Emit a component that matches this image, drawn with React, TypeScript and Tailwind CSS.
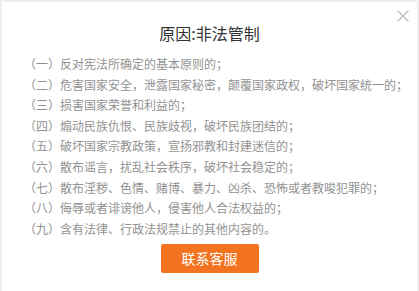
import { X } from 'lucide-react';

const rules = [
	'（一）反对宪法所确定的基本原则的；',
	'（二）危害国家安全，泄露国家秘密，颠覆国家政权，破坏国家统一的；',
	'（三）损害国家荣誉和利益的；',
	'（四）煽动民族仇恨、民族歧视，破坏民族团结的；',
	'（五）破坏国家宗教政策，宣扬邪教和封建迷信的；',
	'（六）散布谣言，扰乱社会秩序，破坏社会稳定的；',
	'（七）散布淫秽、色情、赌博、暴力、凶杀、恐怖或者教唆犯罪的；',
	'（八）侮辱或者诽谤他人，侵害他人合法权益的；',
	'（九）含有法律、行政法规禁止的其他内容的。',
];

export default function App() {
	return (
		<div
			className="w-[419px] h-[291px] bg-[#f0f0f0] overflow-hidden"
			style={{ fontFamily: '"Noto Sans CJK SC", "Noto Sans", sans-serif' }}
		>
			<div className="relative ml-[2px] mt-[2px] w-[415px] h-[289px] bg-white flex flex-col">
				<button className="absolute right-[4px] top-[4px] text-[#c4c4c4]" type="button">
					<X size={20} strokeWidth={2} />
				</button>

				<h2 className="pt-[19px] text-center text-[16px] leading-[24px] text-[#333]">
					原因:非法管制
				</h2>

				<ul className="mt-[9px] pl-[22px] text-[12px] leading-[20.6px] text-[#929292]">
					{rules.map((rule) => (
						<li key={rule} className="whitespace-nowrap">{rule}</li>
					))}
				</ul>

				<div className="flex justify-center mt-[5px]">
					<button
						className="w-[98px] h-[29px] rounded-[2px] bg-[#f37321] text-white text-[14px]"
						type="button"
					>
						联系客服
					</button>
				</div>
			</div>
		</div>
	);
}
